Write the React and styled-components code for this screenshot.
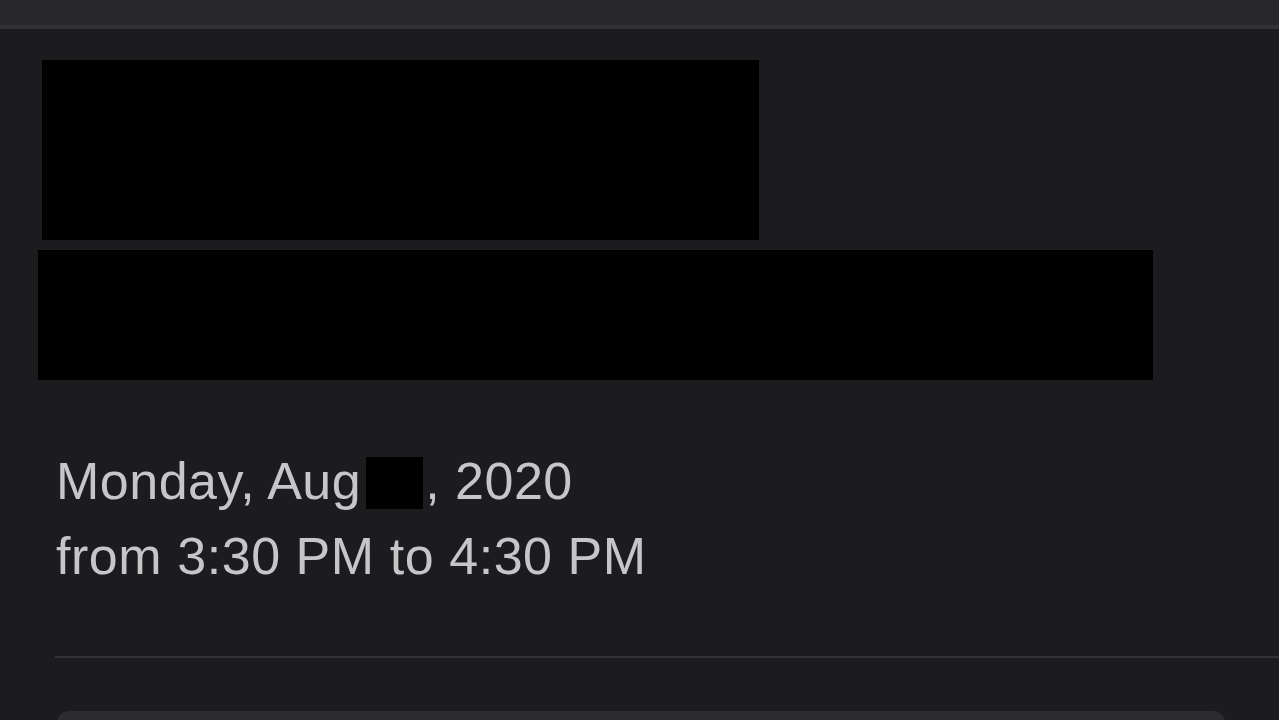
import React from "react"
import styled, { createGlobalStyle } from "styled-components"

const Global = createGlobalStyle`
  html, body {
    margin: 0;
    padding: 0;
    background: #1c1c1e;
    overflow: hidden;
  }
`

const Screen = styled.div`
  width: 1279px;
  height: 720px;
  background: #1c1c1e;
  display: flex;
  flex-direction: column;
  font-family: "Liberation Sans", Arial, sans-serif;
  overflow: hidden;
`

const TopBar = styled.div`
  height: 25px;
  background: #28282b;
  border-bottom: 4px solid #323235;
  flex-shrink: 0;
`

const Body = styled.div`
  display: flex;
  flex-direction: column;
  padding: 31px 0 0 0;
`

const Redacted = styled.div`
  background: #000;
  width: ${p => p.w}px;
  height: ${p => p.h}px;
  margin-left: ${p => p.left}px;
  margin-top: ${p => p.top || 0}px;
`

const When = styled.div`
  margin: 64px 0 0 56px;
  color: #c6c6c8;
  font-size: 52px;
  line-height: 75px;
  letter-spacing: 0.55px;
`

const DateLine = styled.div`
  letter-spacing: 0.5px;
`

const Inline = styled.span`
  display: inline-block;
  background: #000;
  width: 57px;
  height: 52px;
  vertical-align: -10px;
  margin-left: 5px;
  margin-right: 2px;
`

const Divider = styled.div`
  margin: 62px 0 0 55px;
  height: 2px;
  background: #323234;
`

const Card = styled.div`
  margin: 53px 0 0 57px;
  width: 1168px;
  height: 60px;
  flex-shrink: 0;
  background: #2c2c2e;
  border-radius: 12px;
`

export default function App() {
  return (
    <>
      <Global />
      <Screen>
        <TopBar />
        <Body>
          <Redacted w={717} h={180} left={42} />
          <Redacted w={1115} h={130} left={38} top={10} />
          <When>
            <DateLine>Monday, Aug<Inline />, 2020</DateLine>
            <div>from 3:30 PM to 4:30 PM</div>
          </When>
          <Divider />
          <Card />
        </Body>
      </Screen>
    </>
  )
}
